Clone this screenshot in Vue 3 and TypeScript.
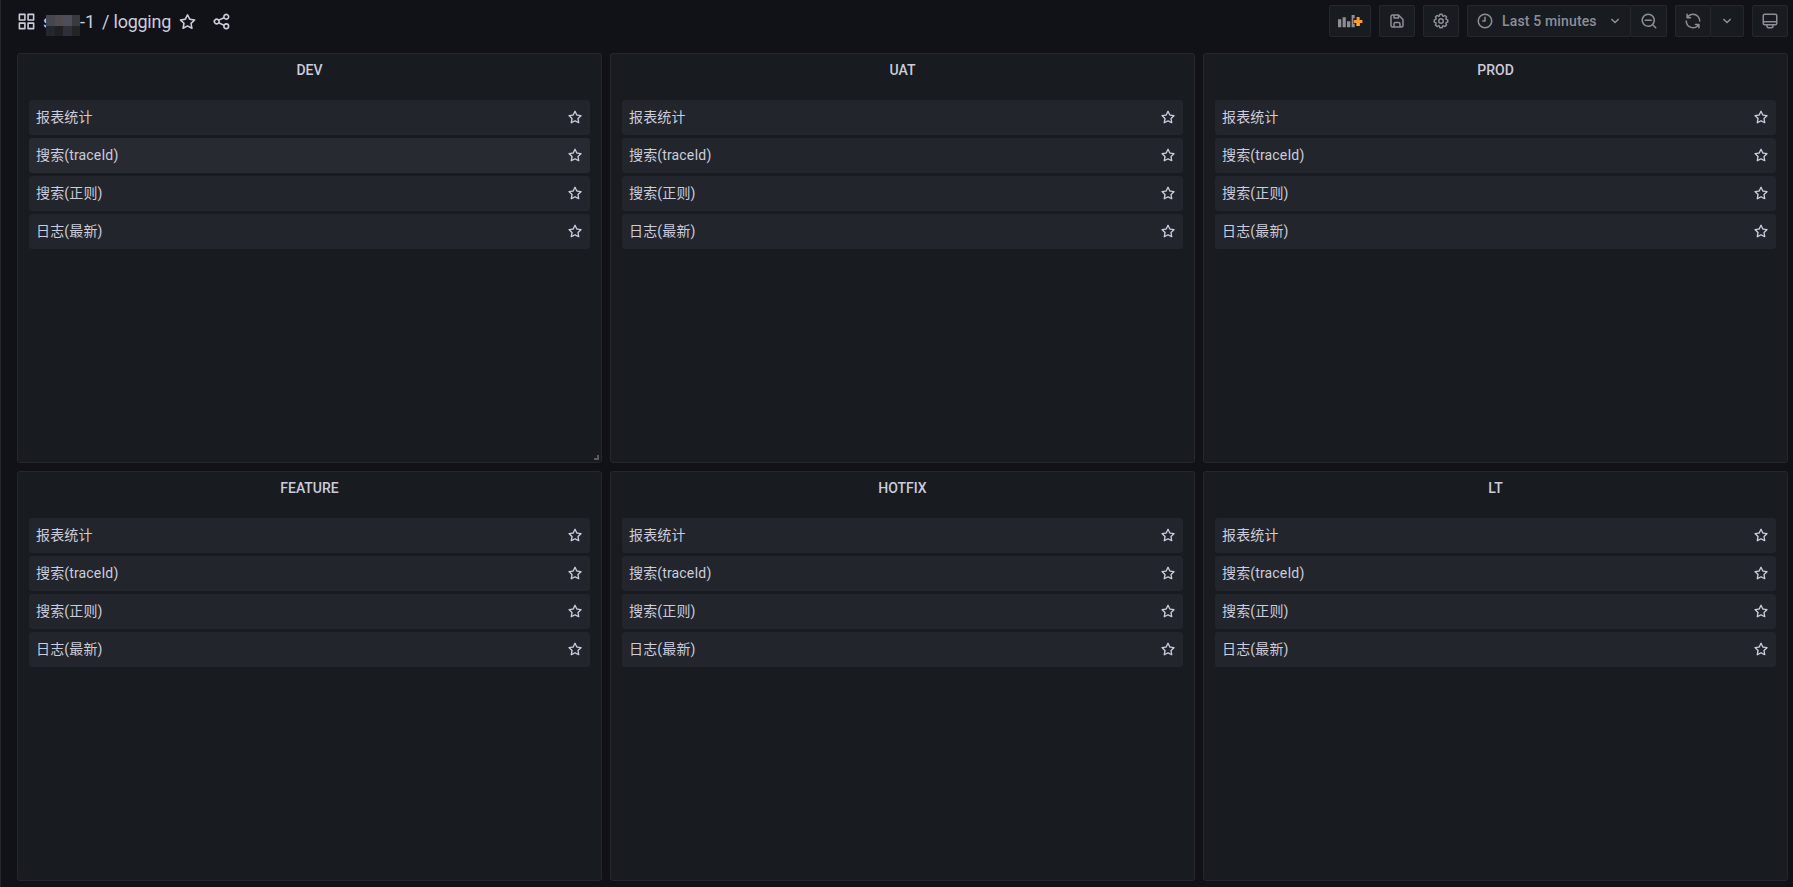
<script setup lang="ts">
interface Cell { id: string }
interface Panel { title: string; active: number; resizable: boolean }

const panels: Panel[] = [
  { title: 'DEV', active: 1, resizable: true },
  { title: 'UAT', active: -1, resizable: false },
  { title: 'PROD', active: -1, resizable: false },
  { title: 'FEATURE', active: -1, resizable: false },
  { title: 'HOTFIX', active: -1, resizable: false },
  { title: 'LT', active: -1, resizable: false },
]

const links: string[] = ['报表统计', '搜索(traceId)', '搜索(正则)', '日志(最新)']

const cells: Cell[] = ['a', 'b', 'c', 'd', 'e', 'f', 'g', 'h'].map((id) => ({ id }))

const icons = {
  apps: 'M10,13H3a1,1,0,0,0-1,1v7a1,1,0,0,0,1,1h7a1,1,0,0,0,1-1V14A1,1,0,0,0,10,13ZM9,20H4V15H9ZM21,2H14a1,1,0,0,0-1,1v7a1,1,0,0,0,1,1h7a1,1,0,0,0,1-1V3A1,1,0,0,0,21,2ZM20,9H15V4h5Zm1,4H14a1,1,0,0,0-1,1v7a1,1,0,0,0,1,1h7a1,1,0,0,0,1-1V14A1,1,0,0,0,21,13Zm-1,7H15V15h5ZM10,2H3A1,1,0,0,0,2,3v7a1,1,0,0,0,1,1h7a1,1,0,0,0,1-1V3A1,1,0,0,0,10,2ZM9,9H4V4H9Z',
  star: 'M22,9.67A1,1,0,0,0,21.14,9l-5.69-.83L12.9,3a1,1,0,0,0-1.8,0L8.55,8.16,2.86,9a1,1,0,0,0-.81.68,1,1,0,0,0,.25,1l4.13,4-1,5.68A1,1,0,0,0,6.9,21.44L12,18.77l5.1,2.67a.93.93,0,0,0,.46.12,1,1,0,0,0,.59-.19,1,1,0,0,0,.4-1l-1-5.68,4.13-4A1,1,0,0,0,22,9.67Zm-6.15,4a1,1,0,0,0-.29.88l.72,4.2-3.76-2a1.06,1.06,0,0,0-.94,0l-3.76,2,.72-4.2a1,1,0,0,0-.29-.88l-3-3,4.21-.61a1,1,0,0,0,.76-.55L12,5.7l1.88,3.82a1,1,0,0,0,.76.55l4.21.61Z',
  share: 'M18,14a4,4,0,0,0-3.08,1.48l-5.1-2.35a3.64,3.64,0,0,0,0-2.26l5.1-2.35A4,4,0,1,0,14,6a4.17,4.17,0,0,0,.07.71L8.79,9.14a4,4,0,1,0,0,5.72l5.28,2.43A4.17,4.17,0,0,0,14,18a4,4,0,1,0,4-4ZM18,4a2,2,0,1,1-2,2A2,2,0,0,1,18,4ZM6,14a2,2,0,1,1,2-2A2,2,0,0,1,6,14Zm12,6a2,2,0,1,1,2-2A2,2,0,0,1,18,20Z',
  save: 'm20.71 9.29-6-6a1 1 0 0 0-.32-.21A1.09 1.09 0 0 0 14 3H6a3 3 0 0 0-3 3v12a3 3 0 0 0 3 3h12a3 3 0 0 0 3-3v-8a1 1 0 0 0-.29-.71ZM9 5h4v2H9Zm6 14H9v-3a1 1 0 0 1 1-1h4a1 1 0 0 1 1 1Zm4-1a1 1 0 0 1-1 1h-1v-3a3 3 0 0 0-3-3h-4a3 3 0 0 0-3 3v3H6a1 1 0 0 1-1-1V6a1 1 0 0 1 1-1h1v3a1 1 0 0 0 1 1h6a1 1 0 0 0 1-1V6.41l4 4Z',
  cog: 'M21.32,9.55l-1.89-.63.89-1.78A1,1,0,0,0,20.13,6L18,3.87a1,1,0,0,0-1.15-.19l-1.78.89-.63-1.89A1,1,0,0,0,13.5,2h-3a1,1,0,0,0-.95.68L8.92,4.57,7.14,3.68A1,1,0,0,0,6,3.87L3.87,6a1,1,0,0,0-.19,1.15l.89,1.78-1.89.63A1,1,0,0,0,2,10.5v3a1,1,0,0,0,.68.95l1.89.63-.89,1.78A1,1,0,0,0,3.87,18L6,20.13a1,1,0,0,0,1.15.19l1.78-.89.63,1.89a1,1,0,0,0,.95.68h3a1,1,0,0,0,.95-.68l.63-1.89,1.78.89A1,1,0,0,0,18,20.13L20.13,18a1,1,0,0,0,.19-1.15l-.89-1.78,1.89-.63A1,1,0,0,0,22,13.5v-3A1,1,0,0,0,21.32,9.55ZM20,12.78l-1.2.4A2,2,0,0,0,17.64,16l.57,1.14-1.1,1.1L16,17.64a2,2,0,0,0-2.79,1.16l-.4,1.2H11.22l-.4-1.2A2,2,0,0,0,8,17.64l-1.14.57-1.1-1.1L6.36,16A2,2,0,0,0,5.2,13.18L4,12.78V11.22l1.2-.4A2,2,0,0,0,6.36,8L5.79,6.89l1.1-1.1L8,6.36A2,2,0,0,0,10.82,5.2l.4-1.2h1.56l.4,1.2A2,2,0,0,0,16,6.36l1.14-.57,1.1,1.1L17.64,8a2,2,0,0,0,1.16,2.79l1.2.4ZM12,8a4,4,0,1,0,4,4A4,4,0,0,0,12,8Zm0,6a2,2,0,1,1,2-2A2,2,0,0,1,12,14Z',
  clock: 'M12,2A10,10,0,1,0,22,12,10,10,0,0,0,12,2Zm0,18a8,8,0,1,1,8-8A8,8,0,0,1,12,20ZM12,6a1,1,0,0,0-1,1v4H9a1,1,0,0,0,0,2h3a1,1,0,0,0,1-1V7A1,1,0,0,0,12,6Z',
  down: 'M17,9.17a1,1,0,0,0-1.41,0L12,12.71,8.46,9.17a1,1,0,0,0-1.41,0,1,1,0,0,0,0,1.42l4.24,4.24a1,1,0,0,0,1.42,0L17,10.59A1,1,0,0,0,17,9.17Z',
  zoomOut: 'M21.71,20.29,18,16.61A9,9,0,1,0,16.61,18l3.68,3.68a1,1,0,0,0,1.42,0A1,1,0,0,0,21.71,20.29ZM11,18a7,7,0,1,1,7-7A7,7,0,0,1,11,18Zm4-8H7a1,1,0,0,0,0,2h8a1,1,0,0,0,0-2Z',
  sync: 'M19.91,15.51H15.38a1,1,0,0,0,0,2h2.4A8,8,0,0,1,4,12a1,1,0,0,0-2,0,10,10,0,0,0,16.88,7.23V21a1,1,0,0,0,2,0V16.5A1,1,0,0,0,19.91,15.51ZM12,2A10,10,0,0,0,5.12,4.77V3a1,1,0,0,0-2,0V7.5a1,1,0,0,0,1,1h4.5a1,1,0,0,0,0-2H6.22A8,8,0,0,1,20,12a1,1,0,0,0,2,0A10,10,0,0,0,12,2Z',
  monitor: 'M19,2H5A3,3,0,0,0,2,5V15a3,3,0,0,0,3,3H7v1a3,3,0,0,0,3,3h4a3,3,0,0,0,3-3V18h2a3,3,0,0,0,3-3V5A3,3,0,0,0,19,2ZM15,19a1,1,0,0,1-1,1H10a1,1,0,0,1-1-1V18h6Zm5-4a1,1,0,0,1-1,1H5a1,1,0,0,1-1-1V14H20Zm0-3H4V5A1,1,0,0,1,5,4H19a1,1,0,0,1,1,1Z',
}
</script>

<template>
  <div class="page">
    <header class="toolbar">
      <div class="crumbs">
        <svg class="icon lg apps" viewBox="0 0 24 24"><path :d="icons.apps" /></svg>
        <div class="folder">
          <span class="initial">s</span>
          <span class="mosaic"><i v-for="c in cells" :key="c.id" :class="c.id"></i></span>
          <span>-1</span>
        </div>
        <span class="slash">/</span>
        <span class="name">logging</span>
        <svg class="icon lg star" viewBox="0 0 24 24"><path :d="icons.star" /></svg>
        <svg class="icon lg share" viewBox="0 0 24 24"><path :d="icons.share" /></svg>
      </div>
      <div class="actions">
        <button class="btn add">
          <svg width="26" height="16" viewBox="0 0 26 16">
            <path fill="#8e8e99" d="M1 6.3h3.3V14.3H1ZM5.6 4.3h3.2v10H5.6ZM10 8.3h3.3v6H10ZM14.6 2h3.1v3.2h-1.4v5.6h1.4v3.5h-3.1Z" />
            <path fill="#ff9830" d="M19.6 4h3v3.1h2.8v2.8h-2.8V13h-3V9.9h-2.9V7.1h2.9Z" />
            <path fill="#fbb914" d="M19.6 9.9h3V13h-3Z" />
          </svg>
        </button>
        <button class="btn"><svg class="icon" viewBox="0 0 24 24"><path :d="icons.save" /></svg></button>
        <button class="btn"><svg class="icon" viewBox="0 0 24 24"><path :d="icons.cog" /></svg></button>
        <div class="group">
          <button class="btn time">
            <svg class="icon" viewBox="0 0 24 24"><path :d="icons.clock" /></svg>
            <span>Last 5 minutes</span>
            <svg class="icon caret" viewBox="0 0 24 24"><path :d="icons.down" /></svg>
          </button>
          <button class="btn"><svg class="icon" viewBox="0 0 24 24"><path :d="icons.zoomOut" /></svg></button>
        </div>
        <div class="group">
          <button class="btn"><svg class="icon" viewBox="0 0 24 24"><path :d="icons.sync" /></svg></button>
          <button class="btn drop"><svg class="icon" viewBox="0 0 24 24"><path :d="icons.down" /></svg></button>
        </div>
        <button class="btn"><svg class="icon" viewBox="0 0 24 24"><path :d="icons.monitor" /></svg></button>
      </div>
    </header>

    <main class="grid">
      <section v-for="p in panels" :key="p.title" class="panel">
        <h2>{{ p.title }}</h2>
        <ul>
          <li v-for="(l, i) in links" :key="l" :class="{ active: i === p.active }">
            <span>{{ l }}</span>
            <svg class="icon sm" viewBox="0 0 24 24"><path :d="icons.star" /></svg>
          </li>
        </ul>
        <span v-if="p.resizable" class="handle"></span>
      </section>
    </main>
  </div>
</template>

<style>
body {
  background: #111217;
}
</style>

<style scoped>
.page {
  box-sizing: border-box;
  height: 887px;
  overflow: hidden;
  border-left: 1px solid #24262b;
  background: #111217;
  color: #ccccdc;
  font-family: Roboto, "Noto Sans CJK SC", sans-serif;
  font-size: 14px;
}
.toolbar {
  display: flex;
  justify-content: space-between;
  height: 53px;
  padding: 5px 5px 0 16px;
  box-sizing: border-box;
}
.crumbs {
  display: flex;
  align-items: center;
  height: 32px;
  font-size: 18px;
  line-height: 28px;
}
.crumbs span {
  padding-top: 2px;
}
.icon {
  display: block;
  flex: none;
  width: 18px;
  height: 18px;
  fill: currentColor;
}
.icon.lg {
  width: 19px;
  height: 19px;
}
.icon.apps {
  margin-left: -0.5px;
}
.icon.sm {
  width: 16px;
  height: 16px;
}
.folder {
  display: flex;
  align-items: center;
  width: 51px;
  margin-left: 7.5px;
}
.initial {
  width: 9px;
}
.crumbs .mosaic {
  position: relative;
  display: grid;
  flex: none;
  grid-template-columns: 9px 8px 9px 8px;
  grid-template-rows: 11px 10px;
  margin-top: 9px;
  margin-left: -6px;
  padding: 0;
}
.a { background: #454650; }
.b { background: #504b4e; }
.c { background: #4e4e59; }
.d { background: #3a393f; }
.e { background: #24272e; }
.f { background: #201f23; }
.g { background: #2d2f39; }
.h { background: #262327; }
.slash {
  width: 12px;
  margin-left: 8px;
}
.name {
  width: 59px;
  margin-left: -0.5px;
  letter-spacing: -0.25px;
}
.star {
  margin-left: 5.5px;
}
.share {
  margin-left: 15px;
}
.actions {
  display: flex;
  gap: 8px;
}
.btn {
  display: flex;
  align-items: center;
  justify-content: center;
  box-sizing: border-box;
  width: 36px;
  height: 32px;
  padding: 0;
  border: 1px solid #25272c;
  border-radius: 2px;
  background: #181b1f;
  color: #8d8e98;
  font: 500 14px/22px Roboto, sans-serif;
}
.add {
  width: 42px;
}
.group {
  display: flex;
}
.group .btn + .btn {
  border-left: 0;
  border-radius: 0 2px 2px 0;
}
.group .time {
  width: 164px;
  justify-content: flex-start;
  padding-left: 8px;
}
.time span {
  margin-left: 8px;
  letter-spacing: 0.15px;
  white-space: nowrap;
}
.caret {
  margin-left: 9px;
}
.group .drop {
  width: 33px;
}
.grid {
  display: grid;
  grid-template-columns: repeat(3, 585px);
  grid-auto-rows: 410px;
  gap: 8px;
  padding-left: 16px;
}
.panel {
  position: relative;
  box-sizing: border-box;
  border: 1px solid #25272c;
  border-radius: 3px;
  background: #181b1f;
}
h2 {
  margin: 0;
  height: 46px;
  font-size: 14px;
  font-weight: 500;
  line-height: 32px;
  text-align: center;
}
ul {
  display: grid;
  gap: 3px;
  margin: 0;
  padding: 0 11px;
  list-style: none;
}
li {
  display: flex;
  align-items: center;
  justify-content: space-between;
  box-sizing: border-box;
  height: 35px;
  padding: 0 7px 1px;
  border-radius: 3px;
  background: #22252b;
  line-height: 22px;
  letter-spacing: 0.15px;
}
li.active {
  background: #282a31;
}
.handle {
  position: absolute;
  right: 2px;
  bottom: 2px;
  width: 3px;
  height: 3px;
  border-right: 2px solid #5a5b5e;
  border-bottom: 2px solid #5a5b5e;
}
</style>
